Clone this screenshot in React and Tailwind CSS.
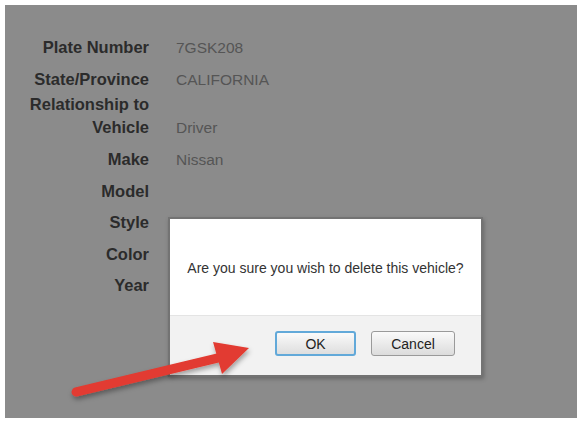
import React from "react";

const rows = [
    { label: "Plate Number", value: "7GSK208" },
    { label: "State/Province", value: "CALIFORNIA" },
    { label: ["Relationship to", "Vehicle"], value: "Driver" },
    { label: "Make", value: "Nissan" },
    { label: "Model", value: "" },
    { label: "Style", value: "" },
    { label: "Color", value: "" },
    { label: "Year", value: "" },
];

// spacing above each row
const rowGap = (i) => {
    if (i === 0) return "";
    if (i === 2) return "mt-[2px]";
    if (i <= 3) return "mt-[9px]";
    return "mt-[8.5px]";
};

const Arrow = () => (
    <svg className="absolute left-0 top-0 pointer-events-none" width="577" height="423" viewBox="0 0 577 423">
        <defs>
            <filter id="arrowShadow" x="-20%" y="-50%" width="140%" height="200%">
                <feDropShadow dx="1" dy="3" stdDeviation="2.5" floodColor="#000" floodOpacity="0.35" />
            </filter>
        </defs>
        <g filter="url(#arrowShadow)">
            <line x1="76" y1="392" x2="222" y2="357" stroke="#e23b30" strokeWidth="9" strokeLinecap="round" />
            <polygon points="213,342 249,348 222,374" fill="#e23b30" />
        </g>
    </svg>
);

const App = () => {
    return (
        <div className="w-[577px] h-[423px] bg-white pt-[5px] pl-[5px] pb-[5px] flex" style={{ fontFamily: '"Liberation Sans", Arial, sans-serif' }}>
            <div className="relative flex-1 bg-[#8b8b8b]">
                {/* vehicle details */}
                <div className="pt-[31px] flex flex-col">
                    {rows.map((row, i) => (
                        <div
                            key={i}
                            className={`grid grid-cols-[144px_1fr] gap-x-[27px] items-end leading-[23px] ${rowGap(i)}`}
                        >
                            <div className="text-right font-bold text-[16.5px] text-[#2b2b2b]">
                                {Array.isArray(row.label) ? row.label.map((l) => <div key={l}>{l}</div>) : row.label}
                            </div>
                            <div className="text-[15.5px] text-[#555555]">{row.value}</div>
                        </div>
                    ))}
                </div>

                {/* confirm dialog */}
                <div className="absolute left-[163px] top-[212px] w-[315px] h-[160px] bg-white border-2 border-[#737373] shadow-[1px_2px_4px_rgba(0,0,0,0.25)] flex flex-col">
                    <div className="flex-1 flex items-center justify-center text-[14px] text-[#333333] pt-[2px]">
                        Are you sure you wish to delete this vehicle?
                    </div>
                    <div className="h-[60px] bg-[#f2f2f2] border-t border-[#e4e4e4] flex items-start justify-end gap-[15px] pt-[15px] pr-[26px]">
                        <button className="w-[81px] h-[25px] rounded-[3px] border-2 border-[#62a9d9] bg-gradient-to-b from-[#fafafa] to-[#dedede] text-[14px] text-[#222222] leading-none">
                            OK
                        </button>
                        <button className="w-[84px] h-[25px] rounded-[3px] border border-[#9a9a9a] bg-gradient-to-b from-[#fafafa] to-[#dcdcdc] text-[14px] text-[#222222] leading-none">
                            Cancel
                        </button>
                    </div>
                </div>
            </div>
            <Arrow />
        </div>
    );
};

export default App;
